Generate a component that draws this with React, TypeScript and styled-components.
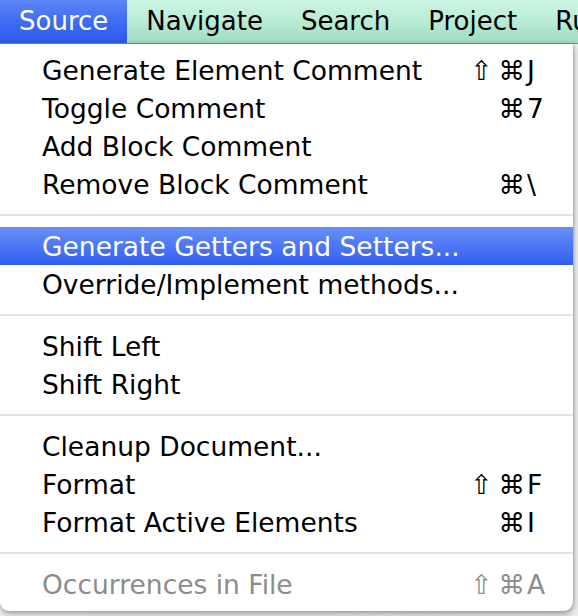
import React from "react";
import styled, { createGlobalStyle } from "styled-components";

const Global = createGlobalStyle`
  html, body { margin: 0; padding: 0; }
  body {
    width: 578px;
    height: 616px;
    overflow: hidden;
    background: #e6e6e6;
    font-family: "DejaVu Sans", "Liberation Sans", sans-serif;
    -webkit-font-smoothing: antialiased;
  }
`;

const Screen = styled.div`
  width: 578px;
  height: 616px;
  display: flex;
  flex-direction: column;
  background: linear-gradient(90deg, #f4f4f4 0%, #ececec 100%);
`;

const MenuBar = styled.div`
  height: 43px;
  flex: none;
  display: flex;
  align-items: stretch;
  background: linear-gradient(180deg, #cdf5e3 0%, #b6ead4 55%, #9fd9c1 100%);
  border-bottom: 1px solid #6f9a88;
  font-size: 26px;
  white-space: nowrap;
  overflow: hidden;
`;

const BarItem = styled.div<{ $active?: boolean }>`
  display: flex;
  align-items: center;
  flex: none;
  padding: 0 19px 2px 19px;
  color: ${(p) => (p.$active ? "#ffffff" : "#000000")};
  background: ${(p) =>
    p.$active
      ? "linear-gradient(180deg, #5d86f4 0%, #3e6cf2 50%, #2b5ae9 100%)"
      : "transparent"};
`;

const Menu = styled.div`
  width: 573px;
  flex: none;
  background: #ffffff;
  padding: 7px 0 8px 0;
  border-radius: 0 0 9px 9px;
  box-shadow: 0 3px 6px rgba(0, 0, 0, 0.35), 1px 0 2px rgba(0, 0, 0, 0.15);
  font-size: 26.5px;
`;

const Row = styled.div<{ $selected?: boolean; $disabled?: boolean }>`
  height: 38px;
  display: grid;
  grid-template-columns: 1fr 90px 28px;
  align-items: center;
  padding-left: 42px;
  padding-right: 18px;
  color: ${(p) => (p.$selected ? "#ffffff" : p.$disabled ? "#8c8c8c" : "#000000")};
  background: ${(p) =>
    p.$selected
      ? "linear-gradient(180deg, #6a90f6 0%, #4f79f4 45%, #335ff1 100%)"
      : "transparent"};
`;

const Label = styled.span`
  white-space: nowrap;
`;

const Mods = styled.span`
  text-align: right;
  white-space: nowrap;
  padding-right: 2px;
`;

const Shift = styled.span`
  margin-right: 6px;
`;

const Key = styled.span`
  white-space: nowrap;
`;

const Separator = styled.div`
  height: 24px;
  display: flex;
  align-items: center;
  &::after {
    content: "";
    flex: 1;
    height: 2px;
    background: #e3e3e3;
  }
`;

type Item =
  | { sep: true }
  | { sep?: false; label: string; shift?: boolean; cmd?: boolean; key?: string; selected?: boolean; disabled?: boolean };

const items: Item[] = [
  { label: "Generate Element Comment", shift: true, cmd: true, key: "J" },
  { label: "Toggle Comment", cmd: true, key: "7" },
  { label: "Add Block Comment" },
  { label: "Remove Block Comment", cmd: true, key: "\\" },
  { sep: true },
  { label: "Generate Getters and Setters...", selected: true },
  { label: "Override/Implement methods..." },
  { sep: true },
  { label: "Shift Left" },
  { label: "Shift Right" },
  { sep: true },
  { label: "Cleanup Document..." },
  { label: "Format", shift: true, cmd: true, key: "F" },
  { label: "Format Active Elements", cmd: true, key: "I" },
  { sep: true },
  { label: "Occurrences in File", shift: true, cmd: true, key: "A", disabled: true },
];

export default function App() {
  return (
    <>
      <Global />
      <Screen>
        <MenuBar>
          <BarItem $active>Source</BarItem>
          <BarItem>Navigate</BarItem>
          <BarItem>Search</BarItem>
          <BarItem>Project</BarItem>
          <BarItem>Run</BarItem>
        </MenuBar>
        <Menu>
          {items.map((it, i) =>
            it.sep ? (
              <Separator key={i} />
            ) : (
              <Row key={i} $selected={it.selected} $disabled={it.disabled}>
                <Label>{it.label}</Label>
                <Mods>
                  {it.shift && <Shift>⇧</Shift>}
                  {it.cmd ? "⌘" : ""}
                </Mods>
                <Key>{it.key ?? ""}</Key>
              </Row>
            )
          )}
        </Menu>
      </Screen>
    </>
  );
}
